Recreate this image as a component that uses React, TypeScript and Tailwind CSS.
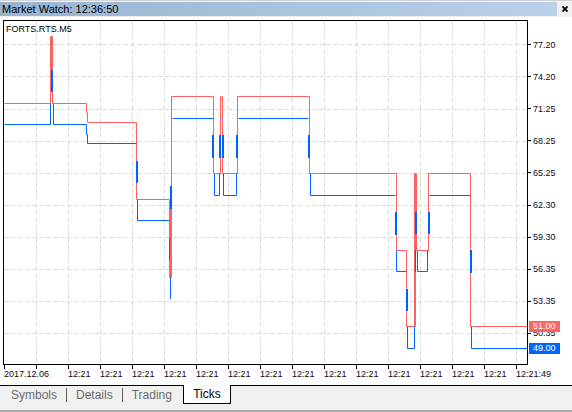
import React from "react";

// pixel rows / cols of the grid inside the chart (page coordinates)
const GRID_X = [36, 68, 100, 132, 164, 196, 228, 260, 292, 324, 356, 388, 420, 452, 484, 516];
const GRID_Y = [44, 76, 109, 141, 173, 205, 237, 269, 301, 333];
const PRICES = ["77.20", "74.20", "71.25", "68.25", "65.25", "62.30", "59.30", "56.35", "53.35", "50.35"];

const ASK_COLOR = "#ff6060";
const BID_COLOR = "#0062ff";

const ASK_PATH =
  "M4 103 H50 V36 H52 V103 H86 V112 H87 V122 H136 V199 H169 V277 H171 V96 H213 V173 H220 V96 H222 V173 H237 V96 H309 V173 H396 V250 H406 V326 H414 V173 H416 V250 H428 V173 H470 V326 H527";

const BID_PATHS = [
  "M4 124 H50 V103",
  "M53 103 V124 H86 V134 H87 V143 H136",
  "M137 199 V220 H169",
  "M172 118 H213",
  "M214 173 V195 H219 V173",
  "M221 118 H222",
  "M223 173 V195 H236 V173",
  "M238 118 H308",
  "M310 173 V195 H395",
  "M396 250 V271 H406",
  "M407 326 V348 H414 V326",
  "M417 250 V271 H427 V250",
  "M429 195 H470",
  "M471 326 V348 H527",
];

// [x, y1, y2, width] short tick bursts
const ASK_BARS: number[][] = [
  [51, 36, 70, 1],
  [170, 199, 277, 1],
  [415, 173, 326, 1],
];
const BID_BARS: number[][] = [
  [51, 70, 91, 2],
  [136, 161, 182, 2],
  [169, 238, 259, 1],
  [170, 277, 298, 1],
  [170, 186, 208, 2],
  [212, 135, 157, 2],
  [219, 135, 157, 2],
  [222, 135, 157, 2],
  [236, 135, 157, 2],
  [308, 135, 157, 2],
  [395, 212, 234, 2],
  [406, 289, 310, 2],
  [415, 250, 271, 1],
  [415, 212, 233, 2],
  [428, 212, 233, 2],
  [470, 250, 272, 2],
];

function Plot() {
  return (
    <svg width={523} height={343} viewBox="4 21 523 343" className="block">
      <g transform="translate(0.5 0.5)" stroke="#d9d9d9" strokeWidth={1} strokeDasharray="4 3">
        {GRID_X.map((x) => (
          <line key={"gx" + x} x1={x} y1={21} x2={x} y2={364} />
        ))}
        {GRID_Y.map((y) => (
          <line key={"gy" + y} x1={4} y1={y} x2={527} y2={y} />
        ))}
      </g>
      <g transform="translate(0.5 0.5)" fill="none" strokeWidth={1}>
        <path d={ASK_PATH} stroke={ASK_COLOR} />
      </g>
      {ASK_BARS.map(([x, a, b, w], i) => (
        <rect key={"ab" + i} x={x} y={a} width={w} height={b - a + 1} fill={ASK_COLOR} />
      ))}
      <g transform="translate(0.5 0.5)" fill="none" strokeWidth={1}>
        {BID_PATHS.map((d, i) => (
          <path key={"bp" + i} d={d} stroke={BID_COLOR} />
        ))}
      </g>
      {BID_BARS.map(([x, a, b, w], i) => (
        <rect key={"bb" + i} x={x} y={a} width={w} height={b - a + 1} fill={BID_COLOR} />
      ))}
    </svg>
  );
}

function PriceAxis() {
  return (
    <div className="relative h-[345px] flex-1">
      <div className="flex flex-col pt-[8.5px]">
        {PRICES.map((p) => (
          <div key={p} className="flex h-[32.1px] items-center">
            <div className="h-px w-[3px] bg-black" />
            <span className="ml-[2px] text-[9px] leading-[10px] text-[#0a0a1e]">{p}</span>
          </div>
        ))}
      </div>
      <span className="absolute left-[1px] top-[301px] h-[11px] w-[31px] bg-[#ff6464] pl-[4px] text-[9px] leading-[11px] text-white">
        51.00
      </span>
      <span className="absolute left-[1px] top-[323px] h-[11px] w-[31px] bg-[#0064ff] pl-[4px] text-[9px] leading-[11px] text-white">
        49.00
      </span>
    </div>
  );
}

function TimeAxis() {
  const cells = Array.from({ length: 17 }, (_, i) => i);
  return (
    <div className="flex h-[20px] pl-[4px]">
      {cells.map((i) => (
        <div key={i} className="flex w-[32px] shrink-0 flex-col">
          <div className="h-[4px] w-px bg-black" />
          <span className="whitespace-nowrap text-[9px] leading-[10px] text-[#0a0a1e]">
            {i === 0 ? "2017.12.06" : i === 1 ? "" : i === 16 ? "12:21:49" : "12:21"}
          </span>
        </div>
      ))}
    </div>
  );
}

export default function App() {
  const tabs = ["Symbols", "Details", "Trading"];
  return (
    <div className="w-[572px] h-[412px] overflow-hidden bg-[#f0f0f0] font-['Liberation_Sans',Arial,sans-serif] text-black select-none">
      <div className="h-[2px] border-t border-[#d4d4d4]" />
      <div className="flex h-[14px]">
        <div className="flex w-[557px] items-center bg-gradient-to-r from-[#99b4d1] to-[#b9d1ea] pl-[2px] text-[11px] leading-none">
          Market Watch: 12:36:50
        </div>
        <div className="flex flex-1 items-center justify-center">
          <svg width={6} height={6} viewBox="0 0 6 6">
            <path d="M0.5 0.5 L5.5 5.5 M5.5 0.5 L0.5 5.5" stroke="#000" strokeWidth={1.8} />
          </svg>
        </div>
      </div>
      <div className="h-[1px]" />

      <div className="h-[368px] overflow-hidden bg-white pt-[3px]">
        <div className="flex">
          <div className="relative ml-[3px] h-[345px] w-[525px] border border-black">
            <Plot />
            <span className="absolute left-[2px] top-[3px] text-[9px] leading-[10px] text-black">FORTS.RTS.M5</span>
          </div>
          <PriceAxis />
        </div>
        <TimeAxis />
      </div>

      <div className="flex h-[27px] items-start border-t border-b-2 border-t-black border-b-[#a8a8a8] pl-[2px]">
        {tabs.map((t, i) => (
          <React.Fragment key={t}>
            {i > 0 && <div className="mt-[2px] h-[14px] w-px bg-[#5a5a5a]" />}
            <span className="flex h-[17px] items-center px-[9px] text-[12px] leading-none text-[#6d6d6d]">{t}</span>
          </React.Fragment>
        ))}
        <div className="-mt-px ml-[2px] flex h-[19px] w-[48px] items-center justify-center border-x border-b border-black bg-white text-[12px] leading-none">
          Ticks
        </div>
      </div>
    </div>
  );
}
